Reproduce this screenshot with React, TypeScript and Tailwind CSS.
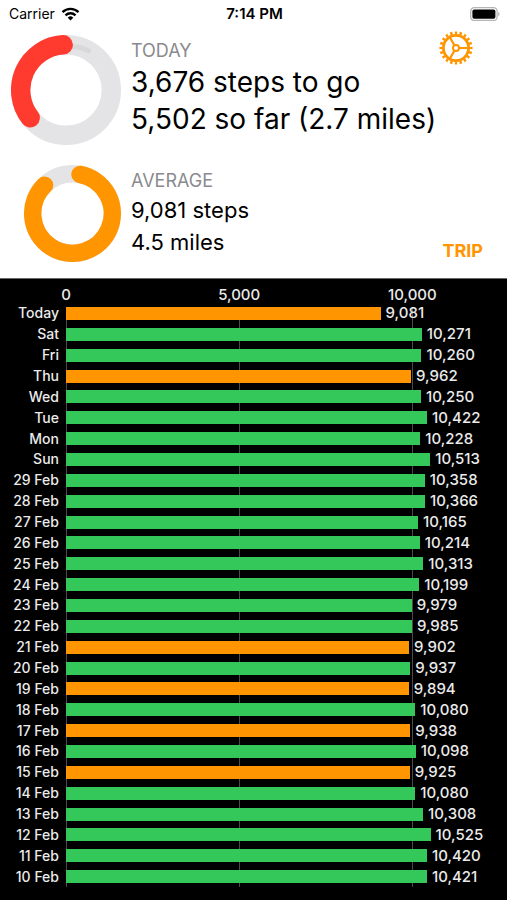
import React, { useState } from 'react';

interface Day {
  label: string;
  steps: number;
}

const days: Day[] = [
  { label: 'Today', steps: 9081 },
  { label: 'Sat', steps: 10271 },
  { label: 'Fri', steps: 10260 },
  { label: 'Thu', steps: 9962 },
  { label: 'Wed', steps: 10250 },
  { label: 'Tue', steps: 10422 },
  { label: 'Mon', steps: 10228 },
  { label: 'Sun', steps: 10513 },
  { label: '29 Feb', steps: 10358 },
  { label: '28 Feb', steps: 10366 },
  { label: '27 Feb', steps: 10165 },
  { label: '26 Feb', steps: 10214 },
  { label: '25 Feb', steps: 10313 },
  { label: '24 Feb', steps: 10199 },
  { label: '23 Feb', steps: 9979 },
  { label: '22 Feb', steps: 9985 },
  { label: '21 Feb', steps: 9902 },
  { label: '20 Feb', steps: 9937 },
  { label: '19 Feb', steps: 9894 },
  { label: '18 Feb', steps: 10080 },
  { label: '17 Feb', steps: 9938 },
  { label: '16 Feb', steps: 10098 },
  { label: '15 Feb', steps: 9925 },
  { label: '14 Feb', steps: 10080 },
  { label: '13 Feb', steps: 10308 },
  { label: '12 Feb', steps: 10525 },
  { label: '11 Feb', steps: 10420 },
  { label: '10 Feb', steps: 10421 },
];

const missedGoal = ['Today', 'Thu', '21 Feb', '19 Feb', '17 Feb', '15 Feb'];

const AXIS_MAX = 12500;
const ticks = [0, 5000, 10000];

const percent = (value: number) => `${(value / AXIS_MAX) * 100}%`;

const StatusBar: React.FC = () => (
  <div className="grid grid-cols-3 items-center h-7 pl-[9px] pr-[7px] text-[14px] leading-5">
    <div className="flex items-center gap-[6px]">
      <span>Carrier</span>
      <svg className="w-[19px] h-[14px]" viewBox="0 0 18 14" fill="none" stroke="#000" strokeWidth="2.4">
        <path d="M1 5.2 A11.4 11.4 0 0 1 17 5.2" />
        <path d="M4 8.3 A7.2 7.2 0 0 1 14 8.3" />
        <path d="M9 13.6 L6.2 10.7 A4 4 0 0 1 11.8 10.7 Z" fill="#000" stroke="none" />
      </svg>
    </div>
    <span className="text-center text-[15px] font-semibold">7:14 PM</span>
    <svg className="w-[30px] h-[14px] justify-self-end" viewBox="0 0 30 14">
      <rect x="0.7" y="0.7" width="26.4" height="12.8" rx="3.6" fill="#fff" stroke="#b5b5b5" strokeWidth="1.3" />
      <rect x="2.4" y="2.4" width="23" height="9.4" rx="1.8" fill="#000" />
      <path d="M28.3 5 a2.4 2.4 0 0 1 0 4.2 Z" fill="#a5a5a5" />
    </svg>
  </div>
);

const TodayRing: React.FC = () => (
  <svg className="w-[110px] h-[110px] shrink-0" viewBox="0 0 110 110" fill="none">
    <circle cx="55" cy="55" r="45.3" stroke="#e4e4e6" strokeWidth="19.4" />
    <path d="M60 11.6 Q69 11.6 77.5 15.8" stroke="#d8d8da" strokeWidth="5" strokeLinecap="round" />
    <path
      d="M52.2 9.8 A45.3 45.3 0 0 0 19.2 82.8"
      stroke="#ff3b30"
      strokeWidth="19.4"
      strokeLinecap="round"
    />
  </svg>
);

const AverageRing: React.FC = () => (
  <svg className="w-[97px] h-[97px] shrink-0" viewBox="0 0 97 97" fill="none">
    <circle cx="48.5" cy="48.5" r="39.8" stroke="#e4e4e6" strokeWidth="17.4" />
    <path
      d="M56 9.4 A39.8 39.8 0 1 1 20.6 20.1"
      stroke="#ff9500"
      strokeWidth="17.4"
      strokeLinecap="round"
    />
  </svg>
);

const GearIcon: React.FC = () => (
  <svg className="w-[34px] h-[34px]" viewBox="0 0 34 34" fill="none" stroke="#ff9500">
    <circle cx="17" cy="17" r="15.1" strokeWidth="3" pathLength="40" strokeDasharray="1 1" strokeDashoffset="0.5" />
    <circle cx="17" cy="17" r="12.6" strokeWidth="2.8" />
    <circle cx="17" cy="17" r="3" strokeWidth="2" />
    <path d="M20 17 H29.5 M15.5 14.4 L10.7 6.1 M15.5 19.6 L10.7 27.9" strokeWidth="2.1" />
  </svg>
);

const StepsChart: React.FC = () => (
  <section className="flex flex-1 flex-col bg-black border-t border-[#6b6b6e] pt-2 pb-[13px] pr-2 leading-4 font-medium text-[#ebebeb]">
    <div className="flex pl-[66px]">
      <div className="relative flex-1 h-4 text-[15px]">
        {ticks.map((tick) => (
          <span key={tick} className="absolute -translate-x-1/2" style={{ left: percent(tick) }}>
            {tick.toLocaleString('en-US')}
          </span>
        ))}
      </div>
    </div>

    <div className="relative flex flex-1 flex-col">
      <div className="absolute left-[66px] right-0 top-1 bottom-0">
        {ticks.map((tick) => (
          <div key={tick} className="absolute top-0 bottom-0 w-px bg-[#4b4b4b]" style={{ left: percent(tick) }} />
        ))}
      </div>
      <ul className="relative flex flex-1 flex-col">
        {days.map((day) => (
          <li key={day.label} className="flex flex-1 items-center">
            <span className="w-[59px] mr-[7px] text-right text-[14px] whitespace-nowrap">{day.label}</span>
            <div className="flex flex-1 items-center">
              <div
                className={`h-[13px] shrink-0 ${missedGoal.includes(day.label) ? 'bg-[#ff9500]' : 'bg-[#34c759]'}`}
                style={{ width: percent(day.steps) }}
              />
              <span className="ml-[5px] text-[15px]">{day.steps.toLocaleString('en-US')}</span>
            </div>
          </li>
        ))}
      </ul>
    </div>
  </section>
);

const App: React.FC = () => {
  const [tripMode, setTripMode] = useState(false);

  return (
    <div className="flex min-h-screen flex-col bg-white text-black font-['Inter','Liberation_Sans',sans-serif]">
      <StatusBar />

      <header className="flex flex-col gap-5 pt-[7px] pb-4 pl-[11px]">
        <div className="flex items-start gap-[10px]">
          <TodayRing />
          <div className="min-w-0 flex-1 pt-1 whitespace-nowrap">
            <h2 className="mb-px text-[18px] leading-6 text-[#8a8a8e]">TODAY</h2>
            <p className="text-[28px] leading-[37px]">3,676 steps to go</p>
            <p className="text-[28px] leading-[37px]">5,502 so far (2.7 miles)</p>
          </div>
          <button type="button" aria-label="Settings" className="-mt-1 mr-[34px] shrink-0">
            <GearIcon />
          </button>
        </div>

        <div className="flex items-start gap-[10px]">
          <div className="flex w-[110px] justify-end">
            <AverageRing />
          </div>
          <div className="pt-1 whitespace-nowrap">
            <h2 className="mb-px text-[18px] leading-6 text-[#8a8a8e]">AVERAGE</h2>
            <p className="text-[22px] leading-8">9,081 steps</p>
            <p className="text-[22px] leading-8">4.5 miles</p>
          </div>
          <button
            type="button"
            aria-pressed={tripMode}
            onClick={() => setTripMode(!tripMode)}
            className="ml-auto mr-6 self-end text-[18px] leading-[22px] font-bold text-[#ff9500]"
          >
            TRIP
          </button>
        </div>
      </header>

      <StepsChart />
    </div>
  );
};

export default App;
